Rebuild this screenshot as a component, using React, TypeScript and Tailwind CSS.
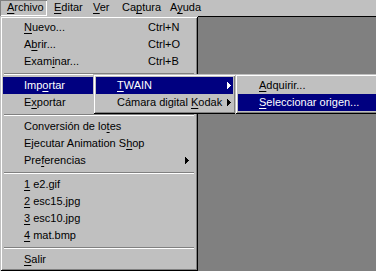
import React from "react";

type Item =
  | { sep: true }
  | { sep?: false; label: React.ReactNode; shortcut?: string; arrow?: boolean; active?: boolean };

const bevel =
  "shadow-[inset_1px_1px_0_#c0c0c0,inset_-1px_-1px_0_#000000,inset_2px_2px_0_#ffffff,inset_-2px_-2px_0_#808080]";

function Arrow({ white }: { white?: boolean }) {
  return (
    <svg width="4" height="7" viewBox="0 0 4 7" className="shrink-0">
      <path d="M0 0H1V1H2V2H3V3H4V4H3V5H2V6H1V7H0Z" fill={white ? "#ffffff" : "#000000"} />
    </svg>
  );
}

function Mn({ pre, k, post }: { pre?: string; k: string; post?: string }) {
  return (
    <span className="whitespace-pre">
      {pre}
      <u className="underline underline-offset-[2px]">{k}</u>
      {post}
    </span>
  );
}

function Menu({
  items,
  className,
  textLeft,
  shortcutLeft,
  arrowRight,
}: {
  items: Item[];
  className: string;
  textLeft: string;
  shortcutLeft?: string;
  arrowRight: string;
}) {
  return (
    <div className={`absolute bg-[#c0c0c0] p-[3px] ${bevel} ${className}`}>
      {items.map((it, i) =>
        it.sep ? (
          <div key={i} className="h-[7px] flex flex-col justify-center px-[1px]">
            <div className="h-[1px] bg-[#808080]" />
            <div className="h-[1px] bg-white" />
          </div>
        ) : (
          <div
            key={i}
            className={`h-[17px] leading-[17px] flex items-center ${textLeft} ${
              it.active ? "bg-[#000080] text-white" : "text-black"
            }`}
          >
            <span className={shortcutLeft ? shortcutLeft : ""}>{it.label}</span>
            {it.shortcut && <span>{it.shortcut}</span>}
            {it.arrow && (
              <span className={`ml-auto flex ${arrowRight}`}>
                <Arrow white={it.active} />
              </span>
            )}
          </div>
        )
      )}
    </div>
  );
}

export default function App() {
  const main: Item[] = [
    { label: <Mn k="N" post="uevo..." />, shortcut: "Ctrl+N" },
    { label: <Mn pre="A" k="b" post="rir..." />, shortcut: "Ctrl+O" },
    { label: <Mn pre="Exam" k="i" post="nar..." />, shortcut: "Ctrl+B" },
    { sep: true },
    { label: <Mn pre="Imp" k="o" post="rtar" />, arrow: true, active: true },
    { label: <Mn pre="E" k="x" post="portar" />, arrow: true },
    { sep: true },
    { label: <Mn pre="Conversión de lo" k="t" post="es" /> },
    { label: <Mn pre="Ejecutar Animation S" k="h" post="op" /> },
    { label: <Mn pre="Pre" k="f" post="erencias" />, arrow: true },
    { sep: true },
    { label: <Mn k="1" post=" e2.gif" /> },
    { label: <Mn k="2" post=" esc15.jpg" /> },
    { label: <Mn k="3" post=" esc10.jpg" /> },
    { label: <Mn k="4" post=" mat.bmp" /> },
    { sep: true },
    { label: <Mn k="S" post="alir" /> },
  ];

  const twain: Item[] = [
    { label: <Mn k="T" post="WAIN" />, arrow: true, active: true },
    { label: <Mn pre="Cámara digital " k="K" post="odak" />, arrow: true },
  ];

  const acquire: Item[] = [
    { label: <Mn k="A" post="dquirir..." /> },
    { label: <Mn k="S" post="eleccionar origen..." />, active: true },
  ];

  const bar = [
    { el: <Mn k="A" post="rchivo" />, w: "w-[47px]", pressed: true },
    { el: <Mn k="E" post="ditar" />, w: "w-[39px]" },
    { el: <Mn k="V" post="er" />, w: "w-[29px]" },
    { el: <Mn pre="Ca" k="p" post="tura" />, w: "w-[48px]" },
    { el: <Mn pre="A" k="y" post="uda" />, w: "w-[50px]" },
  ];

  return (
    <div className="relative w-[376px] h-[271px] overflow-hidden bg-[#c0c0c0] font-['Liberation_Sans',Arial,sans-serif] text-[11px] text-black">
      <div className="h-[16px] flex">
        {bar.map((b, i) => (
          <div
            key={i}
            className={`${b.w} h-[16px] leading-[15px] pl-[7px] ${
              b.pressed ? "shadow-[inset_1px_1px_0_#808080,inset_-1px_-1px_0_#ffffff]" : ""
            }`}
          >
            {b.el}
          </div>
        ))}
      </div>
      <div className="h-[255px] bg-[#808080] border-t border-black" />

      <Menu
        items={main}
        className="left-0 top-[16px] w-[198px]"
        textLeft="pl-[21px]"
        shortcutLeft="w-[124px]"
        arrowRight="mr-[6px]"
      />
      <Menu
        items={twain}
        className="left-[93px] top-[74px] w-[143px]"
        textLeft="pl-[21px]"
        arrowRight="mr-[2px]"
      />
      <Menu
        items={acquire}
        className="left-[235px] top-[74px] w-[145px]"
        textLeft="pl-[21px]"
        arrowRight="mr-[2px]"
      />
    </div>
  );
}
